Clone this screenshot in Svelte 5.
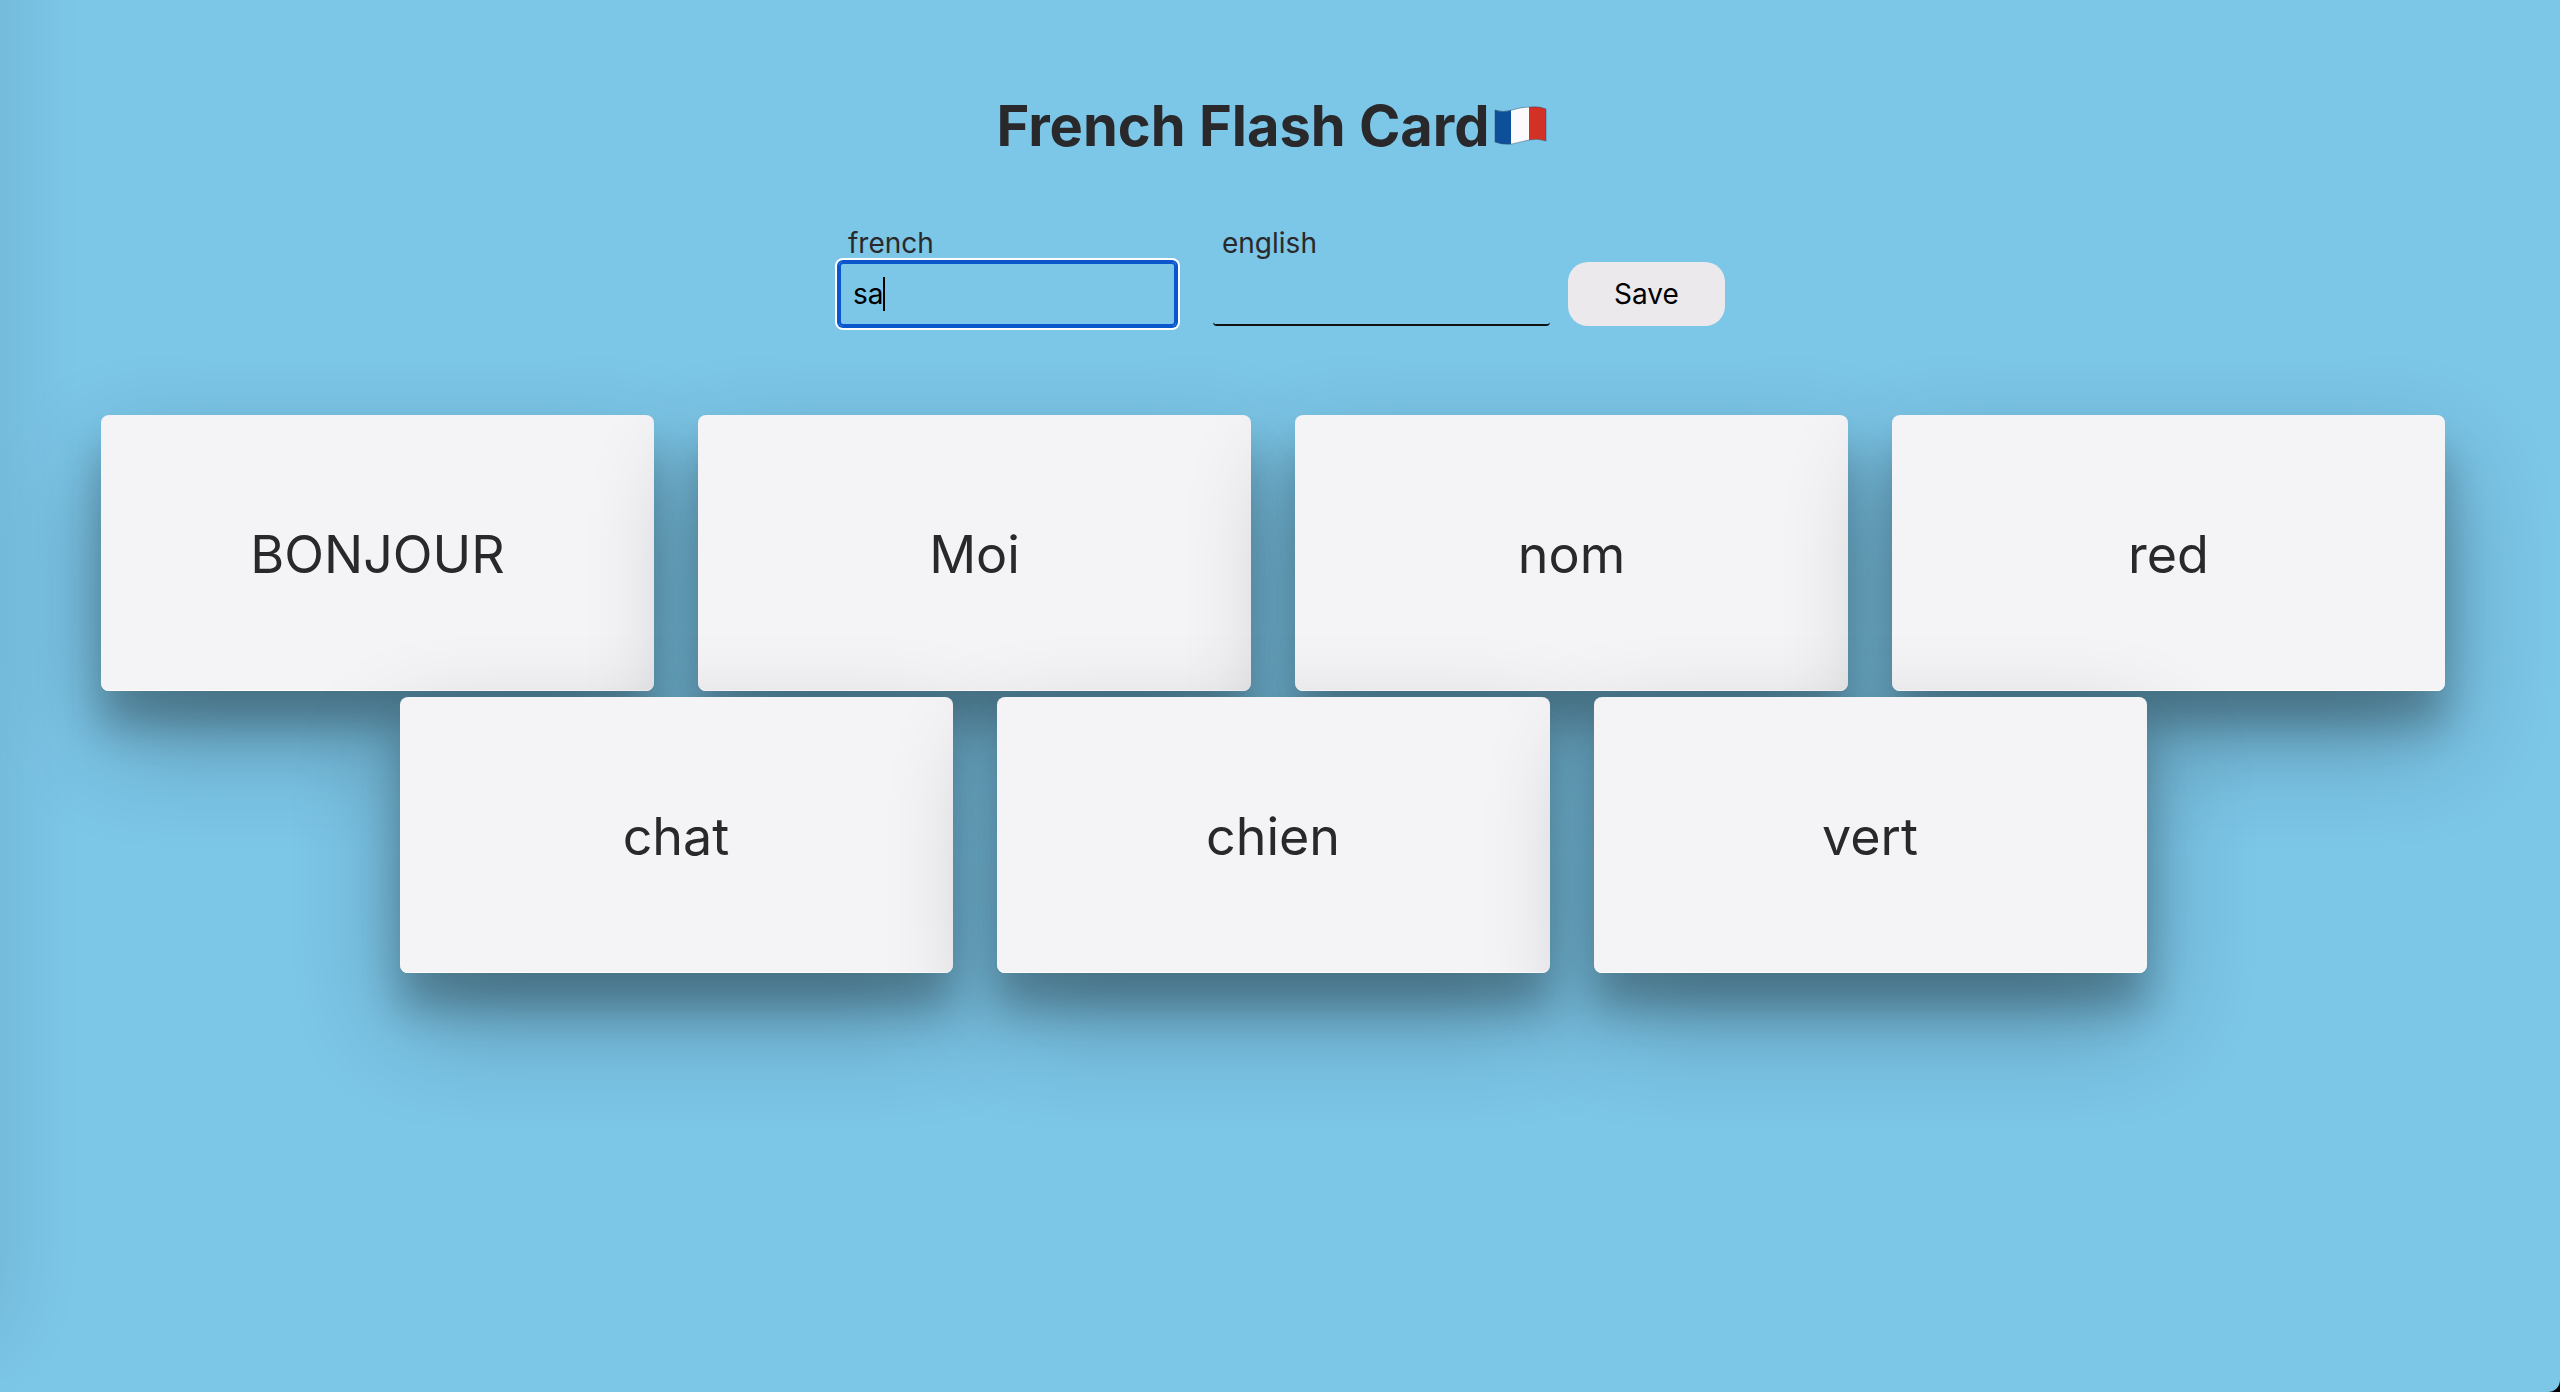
<script>
  let french = $state('sa');
  let english = $state('');
  const cards = ['BONJOUR', 'Moi', 'nom', 'red', 'chat', 'chien', 'vert'];
</script>

<main>
  <header>
    <h1>French Flash Card</h1>
    <svg class="flag" viewBox="0 0 54 40" role="img" aria-label="French flag">
      <defs>
        <clipPath id="wave">
          <path d="M1 4 Q9 7 18 4 T36 1 Q46 0 52 3 V35 Q44 32 35 34 T18 38 Q8 39 1 36 Z" />
        </clipPath>
      </defs>
      <g clip-path="url(#wave)">
        <rect width="18" height="40" fill="#0d5099" />
        <rect x="17" width="19" height="40" fill="#fbfbfd" />
        <rect x="35" width="19" height="40" fill="#d43126" />
      </g>
      <path d="M1 4 Q9 7 18 4 T36 1 Q46 0 52 3 V35 Q44 32 35 34 T18 38 Q8 39 1 36 Z" fill="none" stroke="#2c4a5e" stroke-opacity=".45" />
    </svg>
  </header>

  <form onsubmit={(e) => e.preventDefault()}>
    <div class="field">
      <label for="french">french</label>
      <div class="box">
        <input id="french" class="active" type="text" autocomplete="off" bind:value={french} />
        <span class="caret"></span>
      </div>
    </div>
    <div class="field">
      <label for="english">english</label>
      <div class="box">
        <input id="english" type="text" autocomplete="off" bind:value={english} />
      </div>
    </div>
    <button class="save" type="submit">Save</button>
  </form>

  <section class="cards">
    {#each cards as word}
      <button class="card" type="button">{word}</button>
    {/each}
  </section>
</main>

<style>
  :global(body) {
    margin: 0;
    background: #000;
  }

  main {
    position: relative;
    box-sizing: border-box;
    min-height: 100vh;
    padding-top: 88px;
    overflow: hidden;
    border-bottom-right-radius: 12px;
    background: #7cc6e8;
    color: #29292b;
    font-family: Inter, 'Liberation Sans', sans-serif;
  }

  main::before {
    content: '';
    position: absolute;
    top: -200px;
    bottom: 60px;
    left: -100px;
    width: 92px;
    box-shadow: 0 0 90px rgb(0 0 0 / 0.14);
  }

  header {
    display: flex;
    justify-content: center;
    align-items: center;
    gap: 4px;
    padding-right: 16px;
  }

  h1 {
    margin: 0;
    font-size: 56px;
    line-height: 76px;
    font-weight: 700;
  }

  .flag {
    width: 54px;
    height: 40px;
  }

  form {
    display: flex;
    justify-content: center;
    align-items: flex-end;
    margin-top: 60px;
    padding-left: 4px;
  }

  .field {
    width: 337px;
    margin-right: 37px;
  }

  .field + .field {
    margin-right: 18px;
  }

  label {
    display: block;
    width: max-content;
    padding-left: 9px;
    font-size: 28px;
    line-height: 38px;
  }

  .box {
    position: relative;
  }

  input {
    display: block;
    box-sizing: border-box;
    width: 100%;
    height: 64px;
    padding: 0 15px;
    border: 0;
    border-bottom: 2px solid #111;
    border-radius: 4px;
    outline: 0;
    background: transparent;
    color: #000;
    font: inherit;
    font-size: 28px;
  }

  input.active {
    padding: 0 12px;
    border: 2px solid #0a56cc;
    box-shadow: 0 0 0 2px #0a56cc, 0 0 0 4px #fff;
  }

  .caret {
    position: absolute;
    top: 15px;
    left: 44px;
    width: 2px;
    height: 34px;
    background: #000;
  }

  .save {
    width: 157px;
    height: 64px;
    border: 0;
    border-radius: 20px;
    background: #ebe9ec;
    color: #000;
    font: inherit;
    font-size: 28px;
  }

  .cards {
    display: flex;
    flex-wrap: wrap;
    justify-content: center;
    gap: 6px 44px;
    margin-top: 89px;
    padding: 0 115px 0 101px;
  }

  .card {
    box-sizing: border-box;
    flex: 0 0 calc((100% - 132px) / 4);
    height: 276px;
    padding: 3px 0 0;
    border: 0;
    border-radius: 8px;
    background: #f4f3f6;
    box-shadow:
      inset 0 -1px #fff,
      0 48px 104px rgb(0 0 0 / 0.3),
      0 35px 38px rgb(0 0 0 / 0.22);
    color: inherit;
    font: inherit;
    font-size: 52px;
  }
</style>
